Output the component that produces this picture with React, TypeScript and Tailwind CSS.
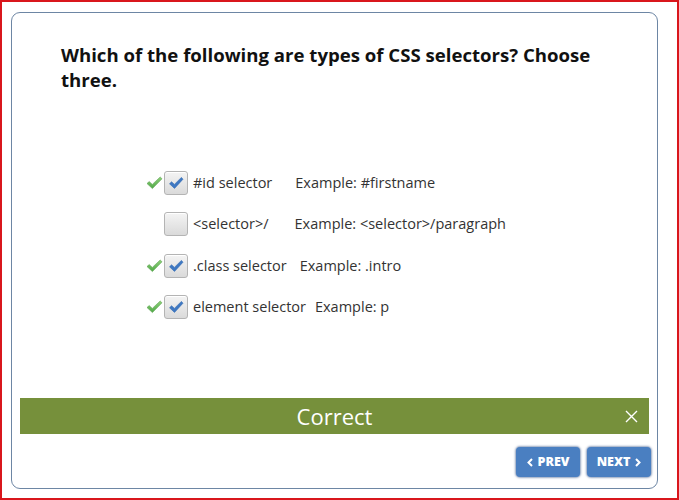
import React from "react";

const GreenCheck = () => (
  <svg width="17" height="14" viewBox="0 0 17 14" className="shrink-0">
    <defs>
      <linearGradient id="gc" x1="0" y1="0" x2="0" y2="1">
        <stop offset="0" stopColor="#8fd07a" />
        <stop offset="1" stopColor="#4fa846" />
      </linearGradient>
    </defs>
    <path d="M1 7.5 L3.2 5.6 L6.3 8.4 L14.2 1 L16 2.8 L6.4 12.6 Z" fill="url(#gc)" stroke="#5ea552" strokeWidth="0.6" strokeLinejoin="round" />
  </svg>
);

const BlueCheck = () => (
  <svg width="16" height="14" viewBox="0 0 16 14">
    <path d="M1.5 7.8 L3.6 5.8 L6.4 8.4 L13.4 1.4 L15 3.2 L6.5 12.4 Z" fill="#3f78c2" stroke="#336bb3" strokeWidth="0.6" strokeLinejoin="round" />
  </svg>
);

const Box = ({ checked }: { checked: boolean }) => (
  <div className="w-[24px] h-[24px] rounded-[3px] border border-[#b4b4b4] bg-gradient-to-b from-[#f4f4f4] to-[#dadada] flex items-center justify-center shadow-[inset_0_1px_0_#fff]">
    {checked && <BlueCheck />}
  </div>
);

const rows = [
  { correct: true, checked: true, label: "#id selector", gap: "ml-[23px]", ex: "Example: #firstname" },
  { correct: false, checked: false, label: "<selector>/", gap: "ml-[26px]", ex: "Example: <selector>/paragraph" },
  { correct: true, checked: true, label: ".class selector", gap: "ml-[13px]", ex: "Example: .intro" },
  { correct: true, checked: true, label: "element selector", gap: "ml-[9px]", ex: "Example: p" },
];

export default function App() {
  return (
    <div
      className="w-[679px] h-[500px] border-2 border-[#d9161c] pt-[10px] pl-[9px] pr-[19px] pb-[9px] bg-white"
      style={{ fontFamily: '"Open Sans", sans-serif' }}
    >
      <div className="w-full h-full border border-[#6d86a4] rounded-[9px] flex flex-col pt-[29px]">
        <h1 className="pl-[49px] pr-[40px] text-[18.6px] leading-[25px] font-bold text-[#111]">
          Which of the following are types of CSS selectors? Choose three.
        </h1>
        <div className="mt-[70px] pl-[134px] flex flex-col">
          {rows.map((r, i) => (
            <div key={i} className="h-[41.5px] flex items-center text-[14.5px] text-[#333]">
              <div className="w-[18px] flex items-center">{r.correct && <GreenCheck />}</div>
              <Box checked={r.checked} />
              <span className="ml-[5px]">{r.label}</span>
              <span className={r.gap}>{r.ex}</span>
            </div>
          ))}
        </div>
        <div className="flex-1" />
        <div className="mx-[8px] h-[36px] bg-[#76903b] relative flex items-center justify-center">
          <span className="text-white text-[22px] leading-none font-normal">Correct</span>
          <svg className="absolute right-[11px] top-[12px]" width="13" height="13" viewBox="0 0 13 13">
            <path d="M1 1 L12 12 M12 1 L1 12" stroke="#fff" strokeWidth="1.4" />
          </svg>
        </div>
        <div className="flex justify-end gap-[7px] pr-[6px] mt-[13px] mb-[11px]">
          <button className="w-[64px] h-[30px] rounded-[4px] bg-[#4a7fc1] text-white text-[12.5px] font-extrabold flex items-center justify-center gap-[5px] shadow-[0_0_2px_1px_rgba(60,90,140,0.55)]">
            <svg width="6" height="9" viewBox="0 0 6 9"><path d="M5 1 L1.5 4.5 L5 8" stroke="#fff" strokeWidth="2" fill="none" /></svg>
            PREV
          </button>
          <button className="w-[64px] h-[30px] rounded-[4px] bg-[#4a7fc1] text-white text-[12.5px] font-extrabold flex items-center justify-center gap-[5px] shadow-[0_0_2px_1px_rgba(60,90,140,0.55)]">
            NEXT
            <svg width="6" height="9" viewBox="0 0 6 9"><path d="M1 1 L4.5 4.5 L1 8" stroke="#fff" strokeWidth="2" fill="none" /></svg>
          </button>
        </div>
      </div>
    </div>
  );
}
